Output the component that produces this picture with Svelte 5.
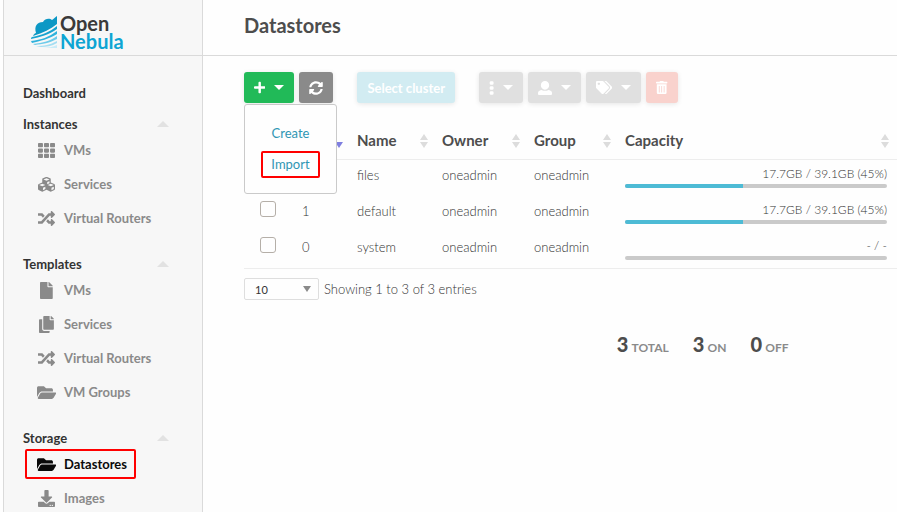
<script>
  const groups = [
    { title: 'Instances', items: [['VMs', 'grid'], ['Services', 'cubes'], ['Virtual Routers', 'random']] },
    { title: 'Templates', items: [['VMs', 'file'], ['Services', 'copy'], ['Virtual Routers', 'random'], ['VM Groups', 'folder']] },
    { title: 'Storage', items: [['Datastores', 'folder'], ['Images', 'download']] },
  ];
  const rows = [
    { id: 2, name: 'files', usage: '17.7GB / 39.1GB (45%)', percent: 45 },
    { id: 1, name: 'default', usage: '17.7GB / 39.1GB (45%)', percent: 45 },
    { id: 0, name: 'system', usage: '- / -', percent: 0 },
  ];
  const columns = ['ID', 'Name', 'Owner', 'Group', 'Capacity'];
  const totals = [['3', 'TOTAL'], ['3', 'ON'], ['0', 'OFF']];

  const icons = {
    grid: { w: 512, d: 'M24 32h101c13 0 24 11 24 24v80c0 13-11 24-24 24H24c-13 0-24-11-24-24V56c0-13 11-24 24-24zM205 32h102c13 0 24 11 24 24v80c0 13-11 24-24 24H205c-13 0-24-11-24-24V56c0-13 11-24 24-24zM387 32h101c13 0 24 11 24 24v80c0 13-11 24-24 24H387c-13 0-24-11-24-24V56c0-13 11-24 24-24zM24 192h101c13 0 24 11 24 24v80c0 13-11 24-24 24H24c-13 0-24-11-24-24v-80c0-13 11-24 24-24zM205 192h102c13 0 24 11 24 24v80c0 13-11 24-24 24H205c-13 0-24-11-24-24v-80c0-13 11-24 24-24zM387 192h101c13 0 24 11 24 24v80c0 13-11 24-24 24H387c-13 0-24-11-24-24v-80c0-13 11-24 24-24zM24 352h101c13 0 24 11 24 24v80c0 13-11 24-24 24H24c-13 0-24-11-24-24v-80c0-13 11-24 24-24zM205 352h102c13 0 24 11 24 24v80c0 13-11 24-24 24H205c-13 0-24-11-24-24v-80c0-13 11-24 24-24zM387 352h101c13 0 24 11 24 24v80c0 13-11 24-24 24H387c-13 0-24-11-24-24v-80c0-13 11-24 24-24z' },
    cubes: { w: 512, d: 'M238 32q18-8 36 0l90 36q20 8 20 28v103l104 42q24 9 24 36v116q0 20-18 30l-94 46q-18 9-36 0l-108-54-108 54q-18 9-36 0l-94-46q-18-10-18-30V277q0-27 24-36l104-42V96q0-20 20-28zM256 66l-92 37 92 38 92-38zM278 182v68l68-29v-66zM128 236l-92 38 92 38 92-38zM150 353v77l72-36v-70zM384 236l-92 38 92 38 92-38zM406 353v77l70-35v-71z' },
    random: { w: 512, d: 'M504.971 359.029c9.373 9.373 9.373 24.569 0 33.941l-80 79.984c-15.01 15.01-40.971 4.49-40.971-16.971V416h-58.785a12.004 12.004 0 0 1-8.773-3.812l-70.556-75.596 53.333-57.143L352 336h32v-39.981c0-21.438 25.943-31.998 40.971-16.971l80 79.981zM12 176h84l52.781 56.551 53.333-57.143-70.556-75.596A11.999 11.999 0 0 0 122.785 96H12c-6.627 0-12 5.373-12 12v56c0 6.627 5.373 12 12 12zm372 0v39.984c0 21.46 25.961 31.98 40.971 16.971l80-79.984c9.373-9.373 9.373-24.569 0-33.941l-80-79.981C409.943 24.021 384 34.582 384 56.019V96h-58.785a12.004 12.004 0 0 0-8.773 3.812L96 336H12c-6.627 0-12 5.373-12 12v56c0 6.627 5.373 12 12 12h110.785c3.326 0 6.503-1.381 8.773-3.812L352 176h32z' },
    file: { w: 384, d: 'M224 136V0H24C10.7 0 0 10.7 0 24v464c0 13.3 10.7 24 24 24h336c13.3 0 24-10.7 24-24V160H248c-13.2 0-24-10.8-24-24zm160-14.1v6.1H256V0h6.1c6.4 0 12.5 2.5 17 7l97.9 98c4.5 4.5 7 10.6 7 16.9z' },
    copy: { w: 448, d: 'M320 448v40c0 13.255-10.745 24-24 24H24c-13.255 0-24-10.745-24-24V120c0-13.255 10.745-24 24-24h72v296c0 30.879 25.121 56 56 56h168zm0-344V0H152c-13.255 0-24 10.745-24 24v368c0 13.255 10.745 24 24 24h272c13.255 0 24-10.745 24-24V128H344c-13.2 0-24-10.8-24-24zm120.971-31.029L375.029 7.029A24 24 0 0 0 358.059 0H352v96h96v-6.059a24 24 0 0 0-7.029-16.97z' },
    folder: { w: 576, d: 'M572.694 292.093L500.27 416.248A63.997 63.997 0 0 1 444.989 448H45.025c-18.523 0-30.064-20.093-20.731-36.093l72.424-124.155A64 64 0 0 1 152 256h399.964c18.523 0 30.064 20.093 20.73 36.093zM152 224h328v-48c0-26.51-21.49-48-48-48H272l-64-64H48C21.49 64 0 85.49 0 112v278.046l69.077-118.418C86.214 242.25 117.989 224 152 224z' },
    download: { w: 512, d: 'M216 0h80c13.3 0 24 10.7 24 24v168h87.7c17.8 0 26.7 21.5 14.1 34.1L269.7 378.3c-7.5 7.5-19.8 7.5-27.3 0L90.1 226.1c-12.6-12.6-3.7-34.1 14.1-34.1H192V24c0-13.3 10.7-24 24-24zm296 376v112c0 13.3-10.7 24-24 24H24c-13.3 0-24-10.7-24-24V376c0-13.3 10.7-24 24-24h146.7l49 49c20.1 20.1 52.5 20.1 72.6 0l49-49H488c13.3 0 24 10.7 24 24zm-124 88c0-11-9-20-20-20s-20 9-20 20 9 20 20 20 20-9 20-20zm64 0c0-11-9-20-20-20s-20 9-20 20 9 20 20 20 20-9 20-20z' },
    plus: { w: 448, d: 'M416 208H272V64c0-17.67-14.33-32-32-32h-32c-17.67 0-32 14.33-32 32v144H32c-17.67 0-32 14.33-32 32v32c0 17.67 14.33 32 32 32h144v144c0 17.67 14.33 32 32 32h32c17.67 0 32-14.33 32-32V304h144c17.67 0 32-14.33 32-32v-32c0-17.67-14.33-32-32-32z' },
    sync: { w: 512, d: 'M370.72 133.28C339.458 104.008 298.888 87.962 255.848 88c-77.458.068-144.328 53.178-162.791 126.85-1.344 5.363-6.122 9.15-11.651 9.15H24.103c-7.498 0-13.194-6.807-11.807-14.176C33.933 94.924 134.813 8 256 8c66.448 0 126.791 26.136 171.315 68.685L463.03 40.97C478.149 25.851 504 36.559 504 57.941V192c0 13.255-10.745 24-24 24H345.941c-21.382 0-32.09-25.851-16.971-40.971l41.75-41.749zM32 296h134.059c21.382 0 32.09 25.851 16.971 40.971l-41.75 41.75c31.262 29.273 71.835 45.319 114.876 45.28 77.418-.07 144.315-53.144 162.787-126.849 1.344-5.363 6.122-9.15 11.651-9.15h57.304c7.498 0 13.194 6.807 11.807 14.176C478.067 417.076 377.187 504 256 504c-66.448 0-126.791-26.136-171.315-68.685L48.97 471.03C33.851 486.149 8 475.441 8 454.059V320c0-13.255 10.745-24 24-24z' },
    dots: { w: 192, d: 'M70 10h52q46 0 46 46v32q0 46-46 46H70q-46 0-46-46V56q0-46 46-46zM70 194h52q46 0 46 46v32q0 46-46 46H70q-46 0-46-46v-32q0-46 46-46zM70 378h52q46 0 46 46v32q0 46-46 46H70q-46 0-46-46v-32q0-46 46-46z' },
    user: { w: 512, d: 'M256 0c88 0 152 68 152 156S344 316 256 316 104 244 104 156 168 0 256 0zM128 326q128 66 256 0l40 11q88 24 88 95v44q0 36-36 36H36q-36 0-36-36v-44q0-71 88-95z' },
    tags: { w: 640, d: 'M497.941 225.941L286.059 14.059A48 48 0 0 0 252.118 0H48C21.49 0 0 21.49 0 48v204.118a48 48 0 0 0 14.059 33.941l211.882 211.882c18.744 18.745 49.136 18.746 67.882 0l204.118-204.118c18.745-18.745 18.745-49.137 0-67.882zM112 160c-26.51 0-48-21.49-48-48s21.49-48 48-48 48 21.49 48 48-21.49 48-48 48zm513.941 133.823L421.823 497.941c-18.745 18.745-49.137 18.745-67.882 0l-.36-.36L527.64 323.522c16.999-16.999 26.362-39.6 26.362-63.64s-9.362-46.641-26.362-63.64L331.397 0h48.721a48 48 0 0 1 33.941 14.059l211.882 211.882c18.745 18.745 18.745 49.137 0 67.882z' },
    trash: { w: 448, d: 'M24 32h112l18-22q6-10 20-10h100q14 0 20 10l18 22h112q24 0 24 24v16q0 24-24 24H24Q0 96 0 72V56q0-24 24-24zM32 128h384v336q0 48-48 48H80q-48 0-48-48zM112 192v256h32V192zM208 192v256h32V192zM304 192v256h32V192z' },
  };
</script>

{#snippet icon(name, size)}
  <svg class="icon" viewBox="0 0 {icons[name].w} 512" height={size} width={(icons[name].w * size) / 512} fill-rule="evenodd" aria-hidden="true">
    <path d={icons[name].d} />
  </svg>
{/snippet}

{#snippet caret()}
  <svg class="icon" viewBox="0 0 10 5" width="10" height="5" aria-hidden="true"><path d="M0 0h10L5 5z" /></svg>
{/snippet}

<div class="app">
  <aside>
    <a class="logo" href="#home" aria-label="OpenNebula">
      <svg viewBox="0 0 27 32" width="27" height="32" aria-hidden="true">
        <path fill="#0c98c5" d="M26 0v8C20 13 12 17 2 20c1-2 1-2 3-3-2-7 1-11 7-11 2-4 7-4 9-2 2-1 3-3 5-4z" />
        <path fill="#18a3cf" d="M26 10v3C18 19 9 21 0 23c0-1 0-1 1-2 10-2 18-5 25-11z" />
        <path fill="#2fb2dc" d="M26 15v3C18 23 9 25 1 27l-1-2c10-1 18-4 26-10z" />
        <path fill="#6ecbea" d="M26 20v3C19 27 11 28 4 29l-2-1c10-1 17-3 24-8z" />
        <path fill="#a5def2" d="M26 25v2c-5 3-11 4-16 4l-5-1c8 0 14-1 21-5z" />
        <path fill="#c9ecf8" d="M26 29v3H11c6 0 11-1 15-3z" />
      </svg>
      <span class="wordmark"><span>Open</span><span class="blue">Nebula</span></span>
    </a>
    <nav>
      <a class="heading" href="#dashboard">Dashboard</a>
      {#each groups as group}
        <section>
          <a class="heading" href="#{group.title}">
            {group.title}
            <svg viewBox="0 0 12 6" width="12" height="6" aria-hidden="true"><path fill="#e2e2e2" d="M0 6h12L6 0z" /></svg>
          </a>
          {#each group.items as [label, glyph]}
            <a class="item" class:active={label === 'Datastores'} href="#{label}">
              <span class="glyph">{@render icon(glyph, 17)}</span>{label}
            </a>
          {/each}
        </section>
      {/each}
    </nav>
  </aside>

  <main>
    <header><h1>Datastores</h1></header>
    <div class="toolbar">
      <div class="set">
        <div class="dropdown">
          <button class="create" aria-label="Add" aria-expanded="true">{@render icon('plus', 13)}{@render caret()}</button>
          <div class="menu">
            <a href="#create">Create</a>
            <a class="marked" href="#import">Import</a>
          </div>
        </div>
        <button class="refresh" aria-label="Refresh">{@render icon('sync', 14)}</button>
      </div>
      <button class="cluster" disabled>Select cluster</button>
      <div class="set">
        <button disabled aria-label="Actions">{@render icon('dots', 14)}{@render caret()}</button>
        <button disabled aria-label="Ownership">{@render icon('user', 14)}{@render caret()}</button>
        <button disabled aria-label="Labels">{@render icon('tags', 13)}{@render caret()}</button>
        <button class="delete" disabled aria-label="Delete">{@render icon('trash', 13)}</button>
      </div>
    </div>

    <table>
      <colgroup><col class="c-check" /><col class="c-id" /><col class="c-name" /><col class="c-owner" /><col class="c-group" /><col /></colgroup>
      <thead>
        <tr>
          <th><input type="checkbox" aria-label="Select all" /></th>
          {#each columns as column}
            <th>
              <button class="sort">
                {column}
                <svg viewBox="0 0 8 14" width="8" height="14" aria-hidden="true">
                  {#if column === 'ID'}
                    <path fill="#7f7fe0" d="M0 8h8l-4 6z" />
                  {:else}
                    <path fill="#dcdcdc" d="M0 6h8L4 0zM0 8h8l-4 6z" />
                  {/if}
                </svg>
              </button>
            </th>
          {/each}
        </tr>
      </thead>
      <tbody>
        {#each rows as row}
          <tr>
            <td><input type="checkbox" aria-label="Select {row.name}" /></td>
            <td>{row.id}</td>
            <td>{row.name}</td>
            <td>oneadmin</td>
            <td>oneadmin</td>
            <td>
              <div class="usage">{row.usage}</div>
              <div class="bar"><div class="fill" style:width="{row.percent}%"></div></div>
            </td>
          </tr>
        {/each}
      </tbody>
    </table>

    <div class="paging">
      <div class="length">
        <select aria-label="Entries per page"><option>10</option><option>25</option></select>
        <svg viewBox="0 0 8 6" width="8" height="6" aria-hidden="true"><path fill="#8a8a8a" d="M0 0h8L4 6z" /></svg>
      </div>
      <span>Showing 1 to 3 of 3 entries</span>
    </div>

    <div class="totals">
      {#each totals as [count, label]}
        <div><strong>{count}</strong> <span>{label}</span></div>
      {/each}
    </div>
  </main>
</div>

<style>
  :global(body) { background: #fefefe; overflow: hidden; }
  .app {
    display: flex;
    box-sizing: border-box;
    height: 100vh;
    padding-left: 3px;
    overflow: hidden;
    font: 300 13px/18px Lato, 'Open Sans', sans-serif;
    color: #4d4d4d;
  }
  a { text-decoration: none; color: inherit; }
  svg { flex: none; display: block; }
  .icon { fill: currentColor; }

  aside {
    flex: none;
    box-sizing: border-box;
    width: 200px;
    background: #f7f7f7;
    border: solid #dadada;
    border-width: 0 1px;
  }
  .logo {
    display: flex;
    gap: 2px;
    box-sizing: border-box;
    height: 56px;
    padding: 14px 0 0 27px;
    border-bottom: 1px solid #dadada;
  }
  .logo svg { margin-top: 2px; }
  .wordmark {
    display: flex;
    flex-direction: column;
    font-size: 20px;
    font-weight: 700;
    line-height: 18px;
    color: #3a3a3a;
  }
  .blue { color: #0ea5d3; }

  nav { padding: 28px 33px 0 19px; font-weight: 700; white-space: nowrap; }
  .heading {
    display: flex;
    justify-content: space-between;
    align-items: center;
    color: #333;
  }
  section { padding-top: 13px; }
  section + section { padding-top: 20px; }
  .item {
    display: flex;
    align-items: center;
    gap: 8px;
    box-sizing: border-box;
    width: fit-content;
    height: 30px;
    margin: 2px;
    padding: 0 7px 0 10px;
    border: 2px solid transparent;
    border-radius: 2px;
    color: #8a8a8a;
  }
  .item + .item { margin-top: 4px; }
  .item.active { color: #0a0a0a; border-color: #f00; }
  .glyph { display: flex; justify-content: center; width: 19px; }

  main { flex: 1; min-width: 0; }
  header {
    box-sizing: border-box;
    height: 56px;
    padding: 12px 41px 0;
    border-bottom: 1px solid #dadada;
  }
  h1 { margin: 0; font-size: 20px; line-height: 26px; font-weight: 700; }

  .toolbar { display: flex; gap: 24px; padding: 16px 0 0 41px; }
  .set { display: flex; gap: 5px; }
  button {
    font: inherit;
    border: 0;
    padding: 0;
  }
  .toolbar button {
    display: flex;
    align-items: center;
    gap: 9px;
    height: 31px;
    padding: 0 10px;
    border-radius: 3px;
    background: #e0e0e0;
    color: #fff;
    box-shadow: 0 1px 5px #0000001a;
  }
  .toolbar .create { background: #21ba58; }
  .toolbar .refresh { background: #8a8a8a; }
  .toolbar .cluster { background: #d2ecf2; font-weight: 700; }
  .toolbar .delete { background: #f9d2cd; }

  .dropdown { position: relative; }
  .menu {
    position: absolute;
    z-index: 1;
    top: 32px;
    left: 0;
    display: flex;
    flex-direction: column;
    align-items: center;
    gap: 4px;
    box-sizing: border-box;
    width: 93px;
    padding: 15px 0;
    border: 1px solid #cacaca;
    border-radius: 3px;
    background: #fefefe;
    font-weight: 400;
    color: #3096b4;
  }
  .menu a { padding: 3px 8px; border: 2px solid transparent; border-radius: 2px; line-height: 17px; }
  .menu .marked { border-color: #f00; }

  table {
    width: calc(100% - 41px);
    margin: 18px 0 0 41px;
    table-layout: fixed;
    border-collapse: collapse;
    border-bottom: 1px solid #ededed;
  }
  .c-check { width: 48px; }
  .c-id { width: 55px; }
  .c-name { width: 85px; }
  .c-owner { width: 92px; }
  .c-group { width: 91px; }
  th { height: 38px; padding: 0 4px 0 10px; text-align: left; }
  th:last-child { padding-right: 8px; }
  thead { border-bottom: 1px solid #ededed; }
  .sort {
    display: flex;
    align-items: center;
    justify-content: space-between;
    width: 100%;
    background: none;
    color: #4d4d4d;
    font-size: 15px;
    font-weight: 700;
  }
  .sort svg { margin-top: 2px; }
  td { height: 30px; padding: 6px 10px 0; vertical-align: top; color: #333; }
  td:first-child, th:first-child { padding-left: 16px; }
  td:first-child { padding-top: 5px; }
  input {
    appearance: none;
    display: block;
    box-sizing: border-box;
    width: 16px;
    height: 16px;
    margin: 0;
    border: 1px solid #b5afa8;
    border-radius: 3px;
    background: #fefefe;
  }
  .usage { font-size: 12px; line-height: 16px; text-align: right; }
  .bar { height: 4px; margin-top: 2px; border-radius: 2px; background: #cacaca; overflow: hidden; }
  .fill { height: 100%; background: #4dbbd5; }

  .paging { display: flex; align-items: center; gap: 5px; padding: 9px 0 0 41px; color: #333; }
  .length { display: grid; align-items: center; width: 75px; }
  .length > * { grid-area: 1 / 1; }
  .length svg { justify-self: end; margin-right: 8px; pointer-events: none; }
  select {
    appearance: none;
    width: 100%;
    height: 22px;
    padding: 0 10px;
    border: 1px solid #dedede;
    border-radius: 2px;
    background: #fefefe;
    color: #333;
    font: 400 11px Lato, sans-serif;
  }

  .totals {
    display: flex;
    justify-content: center;
    gap: 24px;
    width: 56%;
    margin: 31px 0 0 auto;
    font-weight: 700;
    line-height: 26px;
  }
  .totals strong { font-size: 20px; }
  .totals span { font-size: 12px; color: #8a8a8a; }
</style>
